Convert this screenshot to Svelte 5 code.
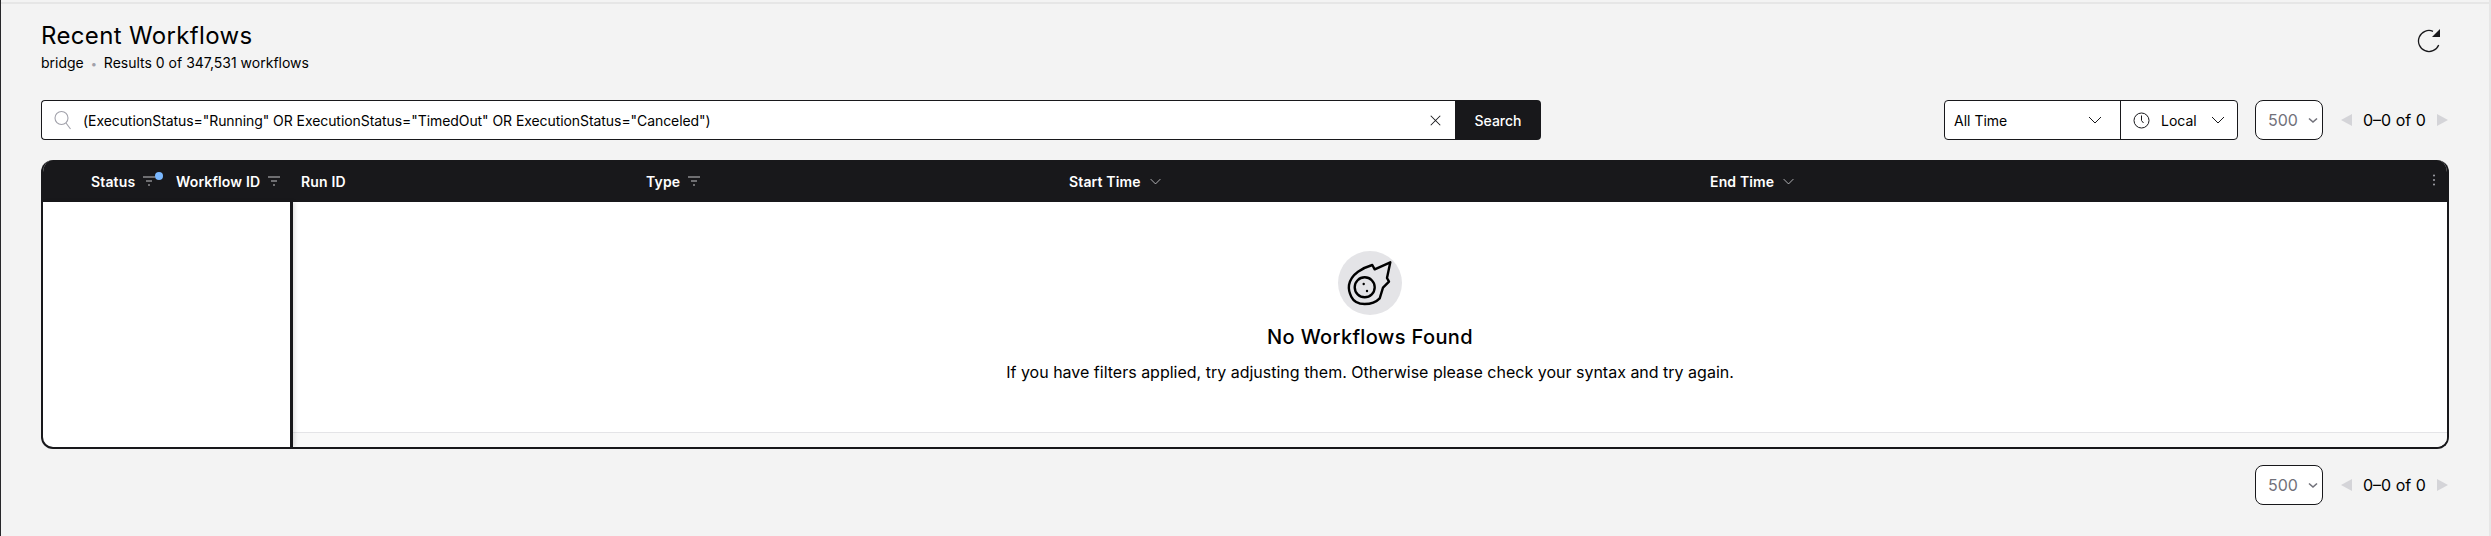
<script>
  const columns = [
    { label: 'Run ID', width: 345 },
    { label: 'Type', width: 423, filter: true },
    { label: 'Start Time', width: 641, chevron: true },
    { label: 'End Time', chevron: true }
  ];
</script>

{#snippet filterIcon()}
  <svg width="12" height="10" viewBox="0 0 12 10" fill="none" stroke="#8a8a8f" stroke-width="1.300">
    <path d="M0 1h12M3 5h6M5 9h2" />
  </svg>
{/snippet}

{#snippet chevron(color, size)}
  <svg width={size} height={size} viewBox="0 0 16 16" fill="none" stroke={color} stroke-width="1">
    <path d="M2 5l6 6 6-6" />
  </svg>
{/snippet}

{#snippet pager()}
  <div class="pager">
    <div class="size-select">
      <span>500</span>
      <svg width="12" height="12" viewBox="0 0 12 12" fill="none" stroke="#71717a" stroke-width="1.600">
        <path d="M2 4.500l4 3.500 4-3.500" />
      </svg>
    </div>
    <div class="pages">
      <span class="arrow left"></span>
      <span class="range">0–0 of 0</span>
      <span class="arrow right"></span>
    </div>
  </div>
{/snippet}

<main class="page">
  <header class="title-row">
    <div>
      <h1>Recent Workflows</h1>
      <p class="subtitle">bridge <span class="dot">•</span> Results 0 of 347,531 workflows</p>
    </div>
    <svg class="refresh" width="24" height="27" viewBox="0 0 24 27" fill="none" stroke="#18181b" stroke-width="1.300">
      <path d="M16 5.300A10.500 10.500 0 1 0 21.700 19" />
      <path d="M23 3v8h-8z" fill="#18181b" stroke="none" />
    </svg>
  </header>

  <section class="toolbar">
    <div class="search">
      <div class="search-input">
        <svg width="17" height="20" viewBox="0 0 17 20" fill="none" stroke="#a1a1aa" stroke-width="1.100">
          <circle cx="7.500" cy="8" r="6.500" />
          <path d="M12 13l4.500 6" />
        </svg>
        <span class="query">(ExecutionStatus="Running" OR ExecutionStatus="TimedOut" OR ExecutionStatus="Canceled")</span>
        <svg width="11" height="11" viewBox="0 0 12 12" fill="none" stroke="#18181b" stroke-width="1.100">
          <path d="M.8.8l10.400 10.400M11.200.8L.8 11.200" />
        </svg>
      </div>
      <button class="search-btn">Search</button>
    </div>

    <div class="controls">
      <div class="time-group">
        <div class="time-range">
          <span>All Time</span>
          {@render chevron('#18181b', 16)}
        </div>
        <div class="timezone">
          <svg width="17" height="17" viewBox="0 0 17 17" fill="none" stroke="#18181b" stroke-width="1">
            <circle cx="8.500" cy="8.500" r="7.500" />
            <path d="M8.500 3.500v5l2 2.500" />
          </svg>
          <span>Local</span>
          {@render chevron('#18181b', 16)}
        </div>
      </div>
      {@render pager()}
    </div>
  </section>

  <section class="table">
    <div class="thead">
      <div class="pinned-head">
        <span class="th status">Status <span class="filter-wrap">{@render filterIcon()}<i class="badge"></i></span></span>
        <span class="th">Workflow ID {@render filterIcon()}</span>
      </div>
      {#each columns as col}
        <div class="th col" style:width={col.width ? col.width + 'px' : null}>
          {col.label}
          {#if col.filter}{@render filterIcon()}{/if}
          {#if col.chevron}{@render chevron('#d4d4d8', 13)}{/if}
        </div>
      {/each}
      <svg class="kebab" width="4" height="12" viewBox="0 0 4 12" fill="#a1a1aa">
        <circle cx="2" cy="1.500" r="1" />
        <circle cx="2" cy="6" r="1" />
        <circle cx="2" cy="10.500" r="1" />
      </svg>
    </div>
    <div class="tbody">
      <div class="pinned"></div>
      <div class="main">
        <div class="empty">
          <div class="empty-icon">
            <svg width="64" height="64" viewBox="0 0 64 64" fill="none" stroke="#000" stroke-width="2.400" stroke-linejoin="round">
              <path d="M52.300 11.300L49 27l2 3.600-6 6-3.300 10.700c-4 4.200-9.300 5.700-15 5.700-6 0-11.200-2.700-13.400-7.300-2-4-2.800-8-2.300-11.700 1-5.500 4.500-10 9-13.300 4.500-3 9.500-5.300 14.300-6.700l2.400 4.300z" />
              <circle cx="26.700" cy="36.300" r="10" />
              <circle cx="25.700" cy="33" r="1.200" fill="#000" stroke="none" />
              <circle cx="29" cy="40" r="1.200" fill="#000" stroke="none" />
            </svg>
          </div>
          <h2>No Workflows Found</h2>
          <p>If you have filters applied, try adjusting them. Otherwise please check your syntax and try again.</p>
        </div>
        <div class="scroll-track"></div>
      </div>
    </div>
  </section>

  <footer class="bottom">
    {@render pager()}
  </footer>
</main>

<style>
  :global(body) {
    margin: 0;
    background: #f3f3f3;
  }

  .page {
    box-sizing: border-box;
    height: 536px;
    padding: 22px 40px 0 40px;
    background: linear-gradient(#e6e6e6, #e6e6e6) 0 2px / 100% 2px no-repeat;
    border-left: 1px solid #27272a;
    border-right: 2px solid #e6e6e6;
    font-family: Inter, sans-serif;
    color: #000;
    overflow: hidden;
  }

  .title-row {
    display: flex;
    justify-content: space-between;
    align-items: flex-start;
    height: 78px;
  }

  h1 {
    margin: 0;
    font-family: Inter, sans-serif;
    font-size: 24px;
    font-weight: 400;
    line-height: 28px;
    letter-spacing: 0.35px;
  }

  .subtitle {
    margin: 3px 0 0;
    font-size: 14px;
    line-height: 20px;
  }

  .dot {
    color: #a1a1aa;
    margin: 0 3px;
    font-size: 11px;
  }

  .refresh {
    margin: 4px 8px 0 0;
  }

  .toolbar {
    display: flex;
    justify-content: space-between;
    height: 40px;
    margin-right: 1px;
  }

  .search {
    display: flex;
    width: 1500px;
  }

  .search-input {
    flex: 1;
    display: flex;
    align-items: center;
    gap: 12px;
    padding: 0 14px 0 12px;
    background: #fff;
    border: 1px solid #18181b;
    border-right: 0;
    border-radius: 4px 0 0 4px;
  }

  .query {
    flex: 1;
    font-size: 14px;
    letter-spacing: -0.07px;
    white-space: nowrap;
  }

  .search-btn {
    width: 86px;
    background: #18181b;
    color: #fff;
    border: 0;
    border-radius: 0 4px 4px 0;
    font-family: Inter, sans-serif;
    font-size: 14px;
    font-weight: 500;
    padding: 0;
  }

  .controls {
    display: flex;
    gap: 17px;
  }

  .time-group {
    display: flex;
    width: 294px;
    box-sizing: border-box;
    background: #fff;
    border: 1px solid #18181b;
    border-radius: 4px;
    font-size: 14px;
  }

  .time-range {
    width: 176px;
    box-sizing: border-box;
    display: flex;
    align-items: center;
    justify-content: space-between;
    padding: 0 17px 0 9px;
    border-right: 1px solid #18181b;
  }

  .timezone {
    flex: 1;
    display: flex;
    align-items: center;
    gap: 11px;
    padding-left: 12px;
  }

  .timezone svg:last-child {
    margin-left: 2px;
  }

  .pager {
    display: flex;
    align-items: center;
    gap: 18px;
    font-size: 16px;
  }

  .size-select {
    box-sizing: border-box;
    width: 68px;
    height: 40px;
    display: flex;
    align-items: center;
    justify-content: space-between;
    padding: 0 3px 0 12px;
    background: #fff;
    border: 1px solid #18181b;
    border-radius: 8px;
    color: #71717a;
  }

  .pages {
    display: flex;
    align-items: center;
    gap: 11px;
  }

  .range {
    width: 63px;
    white-space: nowrap;
  }

  .arrow {
    width: 0;
    height: 0;
    border-top: 6px solid transparent;
    border-bottom: 6px solid transparent;
  }

  .arrow.left {
    border-right: 11px solid #d4d4d8;
  }

  .arrow.right {
    border-left: 11px solid #d4d4d8;
  }

  .table {
    box-sizing: border-box;
    height: 289px;
    margin-top: 20px;
    background: #fff;
    border: 2px solid #18181b;
    border-top: 0;
    border-radius: 12px;
    overflow: hidden;
    display: flex;
    flex-direction: column;
  }

  .thead {
    height: 42px;
    flex: none;
    display: flex;
    align-items: center;
    background: #18181b;
    color: #fff;
    position: relative;
  }

  .th {
    display: inline-flex;
    align-items: center;
    gap: 8px;
    font-size: 14px;
    font-weight: 600;
    letter-spacing: 0.15px;
    white-space: nowrap;
  }

  .pinned-head {
    width: 258px;
    flex: none;
    box-sizing: border-box;
    display: flex;
    padding-left: 48px;
  }

  .status {
    width: 85px;
  }

  .filter-wrap {
    position: relative;
    display: inline-flex;
  }

  .badge {
    position: absolute;
    top: -4px;
    right: -8px;
    width: 8px;
    height: 8px;
    border-radius: 50%;
    background: #7ab8ff;
  }

  .kebab {
    position: absolute;
    right: 11px;
    top: 14px;
  }

  .tbody {
    flex: 1;
    display: flex;
    min-height: 0;
  }

  .pinned {
    width: 247px;
    flex: none;
    position: relative;
    border-right: 3px solid #18181b;
    box-shadow: 2px 0 4px rgba(0, 0, 0, 0.12);
  }

  .main {
    flex: 1;
    display: flex;
    flex-direction: column;
  }

  .empty {
    flex: 1;
    display: flex;
    flex-direction: column;
    align-items: center;
    padding-top: 49px;
  }

  .empty-icon {
    width: 64px;
    height: 64px;
    border-radius: 50%;
    background: #e4e4e7;
  }

  .empty-icon svg {
    display: block;
  }

  h2 {
    margin: 8px 0 0;
    font-size: 20px;
    font-weight: 500;
    line-height: 28px;
    letter-spacing: 0.35px;
  }

  .empty p {
    margin: 9px 0 0;
    font-size: 16px;
    line-height: 24px;
  }

  .scroll-track {
    height: 15px;
    flex: none;
    box-sizing: border-box;
    background: #f9f9f9;
    border-top: 1px solid #e4e4e7;
  }

  .bottom {
    display: flex;
    justify-content: flex-end;
    margin-top: 16px;
    margin-right: 1px;
  }
</style>
